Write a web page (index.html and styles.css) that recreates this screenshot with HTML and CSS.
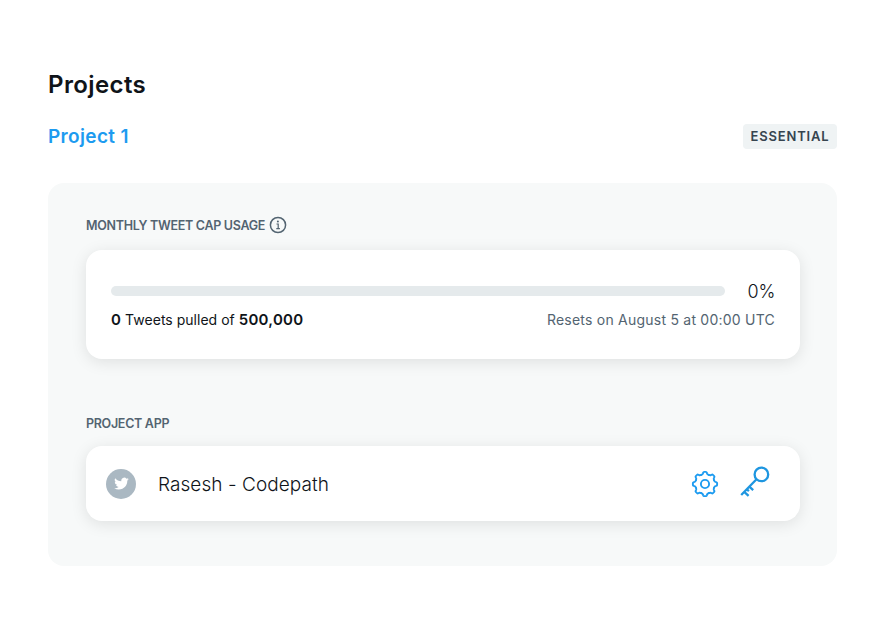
FILE: index.html
```html
<!DOCTYPE html>
<html lang="en">
<head>
<meta charset="utf-8">
<title>Projects</title>
<link rel="stylesheet" href="styles.css">
</head>
<body>
<main class="page">
  <h1 class="title"><span>Projects</span></h1>
  <div class="project-head">
    <a class="project-name">Project 1</a>
    <span class="badge">ESSENTIAL</span>
  </div>
  <section class="panel">
    <h2 class="label"><span class="label-usage">MONTHLY TWEET CAP USAGE</span>
      <svg class="info" viewBox="0 0 18 18" fill="none" stroke="#536471" stroke-width="1.5"><circle cx="9" cy="9" r="7.6"/><path d="M7.5 8h1.7v5M7.3 12.7h3.6" stroke-width="1.2"/><circle cx="8.9" cy="5.4" r="1" fill="#536471" stroke="none"/></svg>
    </h2>
    <div class="card usage">
      <div class="meter"><div class="track"></div><span class="percent">0%</span></div>
      <div class="details">
        <span class="pulled"><b>0</b> Tweets pulled of <b>500,000</b></span>
        <span class="resets">Resets on August 5 at 00:00 UTC</span>
      </div>
    </div>
    <h2 class="label label-app"><span>PROJECT APP</span></h2>
    <div class="card app">
      <span class="avatar"><svg viewBox="0 0 24 24" fill="#fff"><path d="M23.64 4.94c-.86.38-1.78.64-2.75.75.99-.59 1.75-1.53 2.1-2.65-.92.55-1.95.95-3.04 1.16a4.79 4.79 0 0 0-8.16 4.37C7.81 8.37 4.29 6.46 1.92 3.56a4.79 4.79 0 0 0 1.48 6.39 4.77 4.77 0 0 1-2.17-.6v.06a4.79 4.79 0 0 0 3.84 4.7 4.8 4.8 0 0 1-2.16.08 4.79 4.79 0 0 0 4.47 3.32A9.6 9.6 0 0 1 .3 19.5a13.54 13.54 0 0 0 7.34 2.15c8.8 0 13.62-7.3 13.62-13.62l-.02-.62c.94-.68 1.75-1.52 2.4-2.47z"/></svg></span>
      <span class="app-name">Rasesh - Codepath</span>
      <svg class="gear" viewBox="-14 -14 28 28" fill="none" stroke="#1d9bf0" stroke-width="1.9" stroke-linecap="round">
        <defs><path id="tooth" d="M-3.75-9.05Q-2.4-9.6-2.1-10.4L-1.9-11.2Q-1.6-12.1-.9-12.1H.9Q1.6-12.1 1.9-11.2L2.1-10.4Q2.4-9.6 3.75-9.05"/></defs>
        <use href="#tooth"/><use href="#tooth" transform="rotate(45)"/><use href="#tooth" transform="rotate(90)"/><use href="#tooth" transform="rotate(135)"/><use href="#tooth" transform="rotate(180)"/><use href="#tooth" transform="rotate(225)"/><use href="#tooth" transform="rotate(270)"/><use href="#tooth" transform="rotate(315)"/>
        <circle r="4.1"/>
      </svg>
      <svg class="key" viewBox="0 0 30 30" fill="none" stroke="#1e96e0" stroke-width="2.3"><circle cx="21.4" cy="8.4" r="6.8"/><path d="M16.5 13.2 1.2 29M9.3 20.6l3.9 3.6M6.8 23.2l2.1 2M4.2 25.8l4.4 4" /></svg>
    </div>
  </section>
</main>
</body>
</html>
```
FILE: styles.css
```css
* { box-sizing: border-box; }
body { margin: 0; background: #fff; color: #0f1419; font-family: Inter, "Liberation Sans", sans-serif; }
.page { padding: 69px 40px 60px 48px; }
.title { margin: 0; font-size: 24px; line-height: 32px; font-weight: 600; letter-spacing: 0.4px; }
.project-head { display: flex; align-items: center; justify-content: space-between; height: 26px; margin-top: 22px; }
.project-name { padding-top: 2px; color: #1d9bf0; font-size: 19px; line-height: 26px; font-weight: 600; letter-spacing: 0.35px; }
.badge { width: 94px; height: 25px; border-radius: 4px; background: #eff3f4; color: #36444f; font-size: 13px; line-height: 25px; font-weight: 600; letter-spacing: 0.85px; text-align: center; white-space: nowrap; }
.panel { height: 383px; margin-top: 34px; padding: 32px 37px 0 38px; border-radius: 16px; background: #f7f9f9; }
.label { display: flex; align-items: center; gap: 4px; height: 20px; margin: 0; color: #536471; font-size: 12.5px; line-height: 20px; font-weight: 600; letter-spacing: -0.3px; white-space: nowrap; }
.label span { padding-top: 2px; }
.info { width: 18px; height: 18px; }
.card { background: #fff; border-radius: 16px; box-shadow: 0 3px 16px rgba(0, 0, 0, .1); }
.usage { height: 109px; margin-top: 15px; padding: 30px 25px 0; }
.meter { display: flex; align-items: center; justify-content: space-between; height: 22px; }
.track { width: 614px; height: 10px; border-radius: 5px; background: #e5eaec; }
.percent { padding-top: 2px; font-size: 18px; line-height: 22px; font-weight: 350; letter-spacing: -0.3px; }
.details { display: flex; justify-content: space-between; margin-top: 8px; font-size: 14px; line-height: 20px; font-weight: 400; letter-spacing: 0.02px; white-space: nowrap; }
.details b { font-size: 15px; font-weight: 600; letter-spacing: 0.25px; }
.resets { color: #536471; letter-spacing: 0.23px; }
.label-app { margin-top: 54px; }
.app { display: flex; align-items: center; height: 75px; margin-top: 13px; padding: 0 30px 0 20px; }
.avatar { display: flex; align-items: center; justify-content: center; width: 30px; height: 30px; border-radius: 50%; background: #aab8c2; }
.avatar svg { width: 15px; height: 15px; }
.app-name { flex: 1; margin-left: 22px; padding-top: 2px; font-size: 19px; line-height: 26px; font-weight: 350; letter-spacing: 0.06px; }
.gear { width: 28px; height: 28px; margin-right: 21px; }
.key { width: 30px; height: 30px; margin-top: -5px; overflow: visible; }
```
